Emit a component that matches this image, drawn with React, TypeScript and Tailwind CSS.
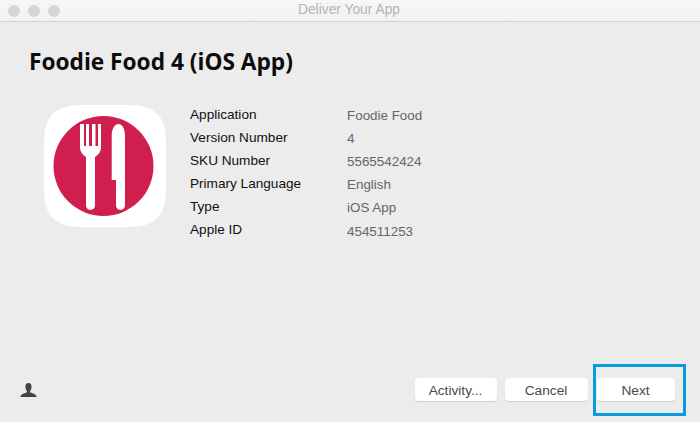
const details = [
  { label: "Application", value: "Foodie Food" },
  { label: "Version Number", value: "4" },
  { label: "SKU Number", value: "5565542424" },
  { label: "Primary Language", value: "English" },
  { label: "Type", value: "iOS App" },
  { label: "Apple ID", value: "454511253" },
];

const AppIcon = () => (
  <svg width="122" height="122" viewBox="0 0 122 122" className="shrink-0">
    <path
      d="M38 0H84C112 0 122 12 122 38V84C122 112 110 122 84 122H38C10 122 0 110 0 84V38C0 12 10 0 38 0Z"
      fill="#ffffff"
    />
    <circle cx="59.5" cy="61" r="50" fill="#d01f4f" />
    {/* fork */}
    <path
      d="M36 19H40V41H42V19H45V41H48V19H51.5V41H54V19H57V42C57 47 54 50 51 52V100C51 106.5 42 106.5 42 100V52C39 50 36 47 36 42Z"
      fill="#ffffff"
    />
    {/* knife */}
    <path
      d="M67.7 31C67.7 23 71 19 74.5 19C78 19 81 23 81 31V100C81 106.5 72 106.5 72 100V75H67.7Z"
      fill="#ffffff"
    />
  </svg>
);

const Button = ({ label, w }: { label: string; w: string }) => (
  <button
    className={`${w} h-[23px] rounded-[4px] bg-white pr-[1px] pt-[2px] text-[13.7px] leading-[22px] text-[#4a4a4a] shadow-[0_1px_1px_rgba(0,0,0,0.12)]`}
  >
    {label}
  </button>
);

export default function App() {
  return (
    <div className="flex h-[422px] w-[700px] flex-col overflow-hidden bg-[#ececec] font-['Liberation_Sans',sans-serif]">
      <div className="relative flex h-[22px] shrink-0 items-center justify-center border-b border-[#d3d3d3] bg-gradient-to-b from-[#f7f7f7] to-[#f1f1f1]">
        <div className="absolute left-[8px] top-[5px] flex gap-2">
          <span className="h-3 w-3 rounded-full bg-[#d6d6d6]" />
          <span className="h-3 w-3 rounded-full bg-[#d6d6d6]" />
          <span className="h-3 w-3 rounded-full bg-[#d6d6d6]" />
        </div>
        <span className="pr-[2px] text-[13.8px] text-[#b4b4b4]">Deliver Your App</span>
      </div>

      <div className="flex-1 pl-[29px] pt-[25px]">
        <h1 className="font-['Open_Sans',sans-serif] text-[22.7px] font-bold leading-[30px] text-[#0c0c0c]">
          Foodie Food 4 (iOS App)
        </h1>
        <div className="mt-[28px] flex pl-[15px]">
          <AppIcon />
          <div className="-mt-[1px] ml-[24px]">
            {details.map((row, i) => (
              <div key={row.label} className="flex h-[23px] items-center">
                <span className="w-[157px] text-[13.6px] text-[#111]">{row.label}</span>
                <span
                  className={
                    i === 5
                      ? "pt-[4px] text-[13.4px] text-[#666]"
                      : "pt-[2px] text-[13.4px] text-[#666]"
                  }
                >
                  {row.value}
                </span>
              </div>
            ))}
          </div>
        </div>
      </div>

      <div className="flex items-center pb-[21px] pl-[20px] pr-[25px]">
        <svg width="17" height="16" viewBox="0 0 17 16" className="mt-[1px]">
          <path
            d="M8.5 1C6 1 5.2 3 5.5 5.5C5.7 7 6.2 8 6.8 8.8V10.2C5 11.3 2 11.5 0.5 14V15H16.5V14C15 11.5 12 11.3 10.2 10.2V8.8C10.8 8 11.3 7 11.5 5.5C11.8 3 11 1 8.5 1Z"
            fill="#444"
          />
        </svg>
        <div className="ml-auto flex gap-[8px]">
          <Button label="Activity..." w="w-[82px]" />
          <Button label="Cancel" w="w-[83px]" />
          <div className="relative ml-[1px] flex">
            <Button label="Next" w="w-[78px]" />
            <div className="absolute -left-[4px] -top-[14px] h-[52px] w-[93px] border-[3px] border-[#0a9ae0]" />
          </div>
        </div>
      </div>
    </div>
  );
}
